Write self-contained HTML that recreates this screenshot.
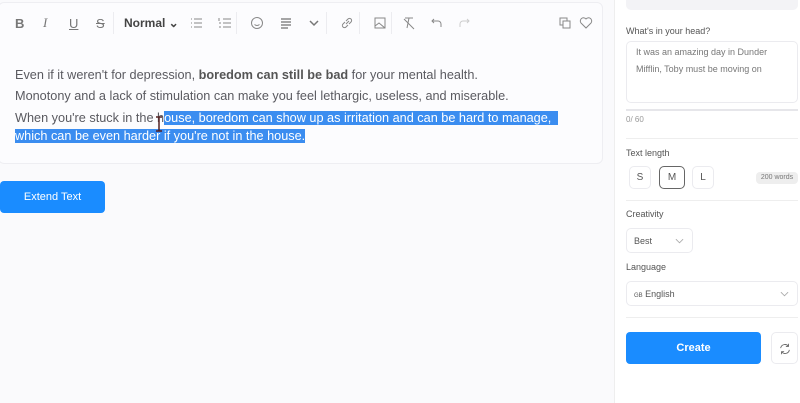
<!DOCTYPE html>
<html><head><meta charset="utf-8"><style>
*{box-sizing:border-box;margin:0;padding:0}
body{width:800px;height:403px;background:#fafafc;font-family:"Liberation Sans",sans-serif;position:relative;overflow:hidden;color:#555}
.card{position:absolute;left:-2px;top:2px;width:605px;height:162px;background:#fcfcfe;border:1px solid #eeeef2;border-radius:6px}
.tb{position:absolute;top:14px;height:18px;display:flex;align-items:center;font-size:13px;color:#777}
.ic{position:absolute;top:15px;width:16px;height:16px}
.sep{position:absolute;top:12px;width:1px;height:22px;background:#ececf0}
.ln{position:absolute;left:15px;font-size:12.7px;color:#5a5a60;line-height:18px;white-space:nowrap}
.sel{background:#3b8df0;color:#fff}
.btn{position:absolute;left:0;top:181px;width:105px;height:32px;background:#1a8cff;border-radius:4px;color:#fff;font-size:11px;text-align:center;line-height:32px}
.panel{position:absolute;left:614px;top:0;width:186px;height:403px;background:#fff;border-left:1px solid #eee}
.lbl{position:absolute;left:11px;font-size:9px;color:#555}
.box{position:absolute;border:1px solid #ebebef;border-radius:5px;background:#fff}
.chev{position:absolute;right:8px;top:8px}
</style></head><body>
<div class="card"></div>
<div class="tb" style="left:15px;font-weight:bold">B</div>
<div class="tb" style="left:43px;font-style:italic;font-family:'Liberation Serif'">I</div>
<div class="tb" style="left:69px;text-decoration:underline">U</div>
<div class="tb" style="left:96px;text-decoration:line-through">S</div>
<div class="sep" style="left:113px"></div>
<div class="tb" style="left:124px;font-weight:bold;color:#444;font-size:12px">Normal ⌄</div>
<svg class="ic" style="left:189px" viewBox="0 0 16 16" stroke="#888" fill="none"><path d="M5 4h8M5 8h8M5 12h8M2 4h1M2 8h1M2 12h1"/></svg>
<svg class="ic" style="left:217px" viewBox="0 0 16 16" stroke="#888" fill="none"><path d="M6 4h8M6 8h8M6 12h8M2 3v3M2 8h2M2 12h2"/></svg>
<div class="sep" style="left:236px"></div>
<svg class="ic" style="left:249px" viewBox="0 0 16 16" stroke="#888" fill="none"><circle cx="8" cy="8" r="5.5"/><path d="M6 7v0M10 7v0M5.5 9.5q2.5 2 5 0"/></svg>
<svg class="ic" style="left:278px" viewBox="0 0 16 16" stroke="#888" fill="none" stroke-width="1.5"><path d="M3 4h10M3 7h10M3 10h10M3 13h7"/></svg>
<svg class="ic" style="left:306px" viewBox="0 0 16 16" stroke="#777" fill="none" stroke-width="1.5"><path d="M4 6l4 4 4-4"/></svg>
<div class="sep" style="left:326px"></div>
<svg class="ic" style="left:339px" viewBox="0 0 16 16" stroke="#888" fill="none"><path d="M7 9l3-3M6 7l-2 2a2 2 0 003 3l2-2M10 9l2-2a2 2 0 00-3-3l-2 2"/></svg>
<div class="sep" style="left:359px"></div>
<svg class="ic" style="left:372px" viewBox="0 0 16 16" stroke="#888" fill="none"><rect x="3" y="3" width="10" height="10"/><path d="M3 11l4-3 6 5M10 6v0"/></svg>
<div class="sep" style="left:391px"></div>
<svg class="ic" style="left:401px" viewBox="0 0 16 16" stroke="#888" fill="none"><path d="M4 3h8M8 3l-2 10M3 4l10 10"/></svg>
<svg class="ic" style="left:429px" viewBox="0 0 16 16" stroke="#888" fill="none"><path d="M5 4L3 6l2 2M3 6h6a3 3 0 013 3v3"/></svg>
<svg class="ic" style="left:456px" viewBox="0 0 16 16" stroke="#ccc" fill="none"><path d="M11 4l2 2-2 2M13 6H7a3 3 0 00-3 3v3"/></svg>
<svg class="ic" style="left:557px" viewBox="0 0 16 16" stroke="#888" fill="none"><rect x="3" y="3" width="7" height="7"/><rect x="6" y="6" width="7" height="7" fill="#fcfcfe"/></svg>
<svg class="ic" style="left:578px" viewBox="0 0 16 16" stroke="#888" fill="none"><path d="M8 13L3 8a3 3 0 015-4 3 3 0 015 4z"/></svg>
<div class="ln" style="top:66px">Even if it weren't for depression, <b style="color:#555">boredom can still be bad</b> for your mental health.</div>
<div class="ln" style="top:87px">Monotony and a lack of stimulation can make you feel lethargic, useless, and miserable.</div>
<div class="ln" style="top:109px">When you're stuck in the h<span class="sel">ouse, boredom can show up as irritation and can be hard to manage, &nbsp;</span></div>
<div class="ln" style="top:127px"><span class="sel">which can be even harder if you're not in the house.</span></div>
<div class="btn">Extend Text</div>
<div class="panel">
<div class="box" style="left:11px;top:-5px;width:172px;height:15px;background:#f3f3f6;border:none"></div>
<div class="lbl" style="top:26px">What's in your head?</div>
<div class="box" style="left:11px;top:41px;width:172px;height:62px"></div>
<div style="position:absolute;left:21px;top:44px;font-size:9px;color:#777;line-height:17px">It was an amazing day in Dunder<br>Mifflin, Toby must be moving on</div>
<div style="position:absolute;left:11px;top:109px;width:172px;height:2px;background:#e6e6ea"></div>
<div class="lbl" style="top:115px;color:#999;font-size:8px">0/ 60</div>
<div style="position:absolute;left:11px;top:138px;width:172px;height:1px;background:#eee"></div>
<div class="lbl" style="top:148px">Text length</div>
<div class="box" style="left:14px;top:166px;width:22px;height:23px;text-align:center;line-height:21px;font-size:10px">S</div>
<div class="box" style="left:44px;top:166px;width:26px;height:23px;text-align:center;line-height:21px;font-size:10px;border-color:#666">M</div>
<div class="box" style="left:77px;top:166px;width:22px;height:23px;text-align:center;line-height:21px;font-size:10px">L</div>
<div style="position:absolute;left:141px;top:172px;width:42px;height:12px;background:#eee;border-radius:4px;font-size:7px;color:#777;text-align:center;line-height:12px">200 words</div>
<div style="position:absolute;left:11px;top:200px;width:172px;height:1px;background:#eee"></div>
<div class="lbl" style="top:209px">Creativity</div>
<div class="box" style="left:11px;top:228px;width:67px;height:25px;font-size:9px;padding:7px 0 0 7px">Best <svg class="chev" width="9" height="8" viewBox="0 0 10 8" stroke="#aaa" fill="none"><path d="M1 2l4 4 4-4"/></svg></div>
<div class="lbl" style="top:262px">Language</div>
<div class="box" style="left:11px;top:281px;width:172px;height:25px;font-size:9px;padding:7px 0 0 7px"><span style="font-size:6px">GB</span> English <svg class="chev" width="9" height="8" viewBox="0 0 10 8" stroke="#aaa" fill="none"><path d="M1 2l4 4 4-4"/></svg></div>
<div style="position:absolute;left:11px;top:317px;width:172px;height:1px;background:#eee"></div>
<div style="position:absolute;left:11px;top:332px;width:135px;height:32px;background:#1a8cff;border-radius:4px;color:#fff;font-size:11px;font-weight:bold;text-align:center;line-height:32px">Create</div>
<div class="box" style="left:156px;top:332px;width:27px;height:32px"><svg style="position:absolute;left:6px;top:9px" width="14" height="14" viewBox="0 0 16 16" stroke="#666" fill="none"><path d="M3 7a5 5 0 019-2M13 9a5 5 0 01-9 2M12 2v3H9M4 14v-3h3"/></svg></div>
</div>
<svg style="position:absolute;left:154px;top:116px" width="10" height="16" viewBox="0 0 10 16" stroke="#522" stroke-width="1.5" fill="none"><path d="M2 1h6M5 1v14M2 15h6"/></svg>
</body></html>
